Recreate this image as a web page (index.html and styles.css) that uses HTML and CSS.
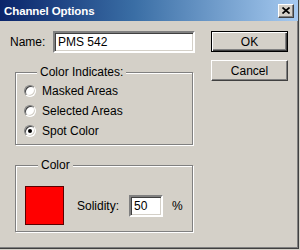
FILE: index.html
```html
<!DOCTYPE html>
<html lang="en">
<head>
    <meta charset="UTF-8">
    <title>Channel Options</title>
    <link rel="stylesheet" href="styles.css">
</head>
<body>
    <div class="window">
        <div class="titlebar">
            <span class="title">Channel Options</span>
            <button class="close-btn" aria-label="Close">
                <svg width="8" height="7" viewBox="0 0 8 7">
                    <path d="M0.5 0.5 L7.5 6.5 M7.5 0.5 L0.5 6.5" stroke="#000" stroke-width="1.7" fill="none"/>
                </svg>
            </button>
        </div>

        <div class="dialog-body">
            <div class="main-col">
                <div class="name-row">
                    <label for="channelName">Name:</label>
                    <input type="text" id="channelName" class="field name-input" value="PMS 542">
                </div>

                <fieldset class="group indicates">
                    <legend>Color Indicates:</legend>
                    <label class="radio-row"><span class="radio"></span>Masked Areas</label>
                    <label class="radio-row"><span class="radio"></span>Selected Areas</label>
                    <label class="radio-row"><span class="radio checked"></span>Spot Color</label>
                </fieldset>

                <fieldset class="group color-group">
                    <legend>Color</legend>
                    <div class="color-row">
                        <div class="swatch"></div>
                        <label for="solidity" class="solidity-label">Solidity:</label>
                        <input type="text" id="solidity" class="field solidity-input" value="50">
                        <span class="percent">%</span>
                    </div>
                </fieldset>
            </div>

            <div class="buttons">
                <button class="btn default">OK</button>
                <button class="btn">Cancel</button>
            </div>
        </div>
    </div>
</body>
</html>
```

FILE: styles.css
```css
* {
    margin: 0;
    padding: 0;
    box-sizing: border-box;
}

body {
    background: #d4d0c8;
    font-family: 'Liberation Sans', Arial, sans-serif;
    font-size: 12px;
    color: #000;
}

.window {
    width: 299px;
    height: 249px;
    background: #d4d0c8;
    border-right: 1px solid #404040;
    border-bottom: 1px solid #404040;
    box-shadow: inset -1px -1px 0 #808080;
}

.titlebar {
    height: 21px;
    display: flex;
    align-items: center;
    justify-content: space-between;
    padding: 0 4px 0 4px;
    background: linear-gradient(90deg, #0a246a 0%, #3a6ea5 45%, #a6caf0 100%);
}

.title {
    color: #fff;
    font-weight: bold;
    font-size: 11.5px;
    letter-spacing: -0.1px;
}

.close-btn {
    width: 16px;
    height: 14px;
    display: flex;
    align-items: center;
    justify-content: center;
    background: #d4d0c8;
    border: 1px solid;
    border-color: #fff #404040 #404040 #fff;
    box-shadow: inset -1px -1px 0 #808080;
}

.dialog-body {
    display: flex;
    padding: 10px 0 0 10px;
}

.main-col {
    width: 185px;
}

.name-row {
    display: flex;
    align-items: center;
    height: 22px;
}

.name-row label {
    width: 43px;
}

.field {
    height: 22px;
    border: 2px solid;
    border-color: #808080 #fff #fff #808080;
    box-shadow: inset 1px 1px 0 #404040, inset -1px -1px 0 #d4d0c8;
    background: #fff;
    font-family: inherit;
    font-size: 12px;
    color: #000;
    padding: 0 3px;
    outline: none;
}

.name-input {
    width: 142px;
}

/* etched group boxes */
.group {
    margin-left: 5px;
    width: 178px;
    padding: 0;
    border: 1px solid #808080;
    box-shadow: inset 1px 1px 0 #fff, 1px 1px 0 #fff;
}

.group legend {
    margin-left: 13px;
    padding: 0 3px;
    line-height: 14px;
    background: #d4d0c8;
}

.indicates {
    margin-top: 12px;
    padding: 2px 0 3px 8px;
}

.radio-row {
    display: flex;
    align-items: center;
    height: 20px;
}

.radio {
    width: 12px;
    height: 12px;
    margin-right: 6px;
    border-radius: 50%;
    background: #fff;
    border: 1px solid;
    border-color: #808080 #fff #fff #808080;
    box-shadow: inset 1px 1px 0 #404040, inset -1px -1px 0 #d4d0c8;
    display: flex;
    align-items: center;
    justify-content: center;
}

.radio.checked::after {
    content: '';
    width: 4px;
    height: 4px;
    border-radius: 50%;
    background: #000;
}

.color-group {
    margin-top: 13px;
    padding: 14px 0 6px 9px;
}

.color-row {
    display: flex;
    align-items: center;
}

.swatch {
    width: 39px;
    height: 39px;
    background: #ff0000;
    border: 1px solid #5a0000;
}

.solidity-label {
    margin-left: 13px;
    width: 52px;
}

.solidity-input {
    width: 34px;
}

.percent {
    margin-left: 9px;
}

.buttons {
    margin-left: 16px;
    display: flex;
    flex-direction: column;
    gap: 8px;
}

.btn {
    width: 77px;
    height: 21px;
    background: #d4d0c8;
    font-family: inherit;
    font-size: 12px;
    color: #000;
    border: 1px solid;
    border-color: #fff #404040 #404040 #fff;
    box-shadow: inset -1px -1px 0 #808080;
}

.btn.default {
    border: 1px solid #000;
    box-shadow: inset 1px 1px 0 #fff, inset -1px -1px 0 #404040, inset -2px -2px 0 #808080;
}
```
